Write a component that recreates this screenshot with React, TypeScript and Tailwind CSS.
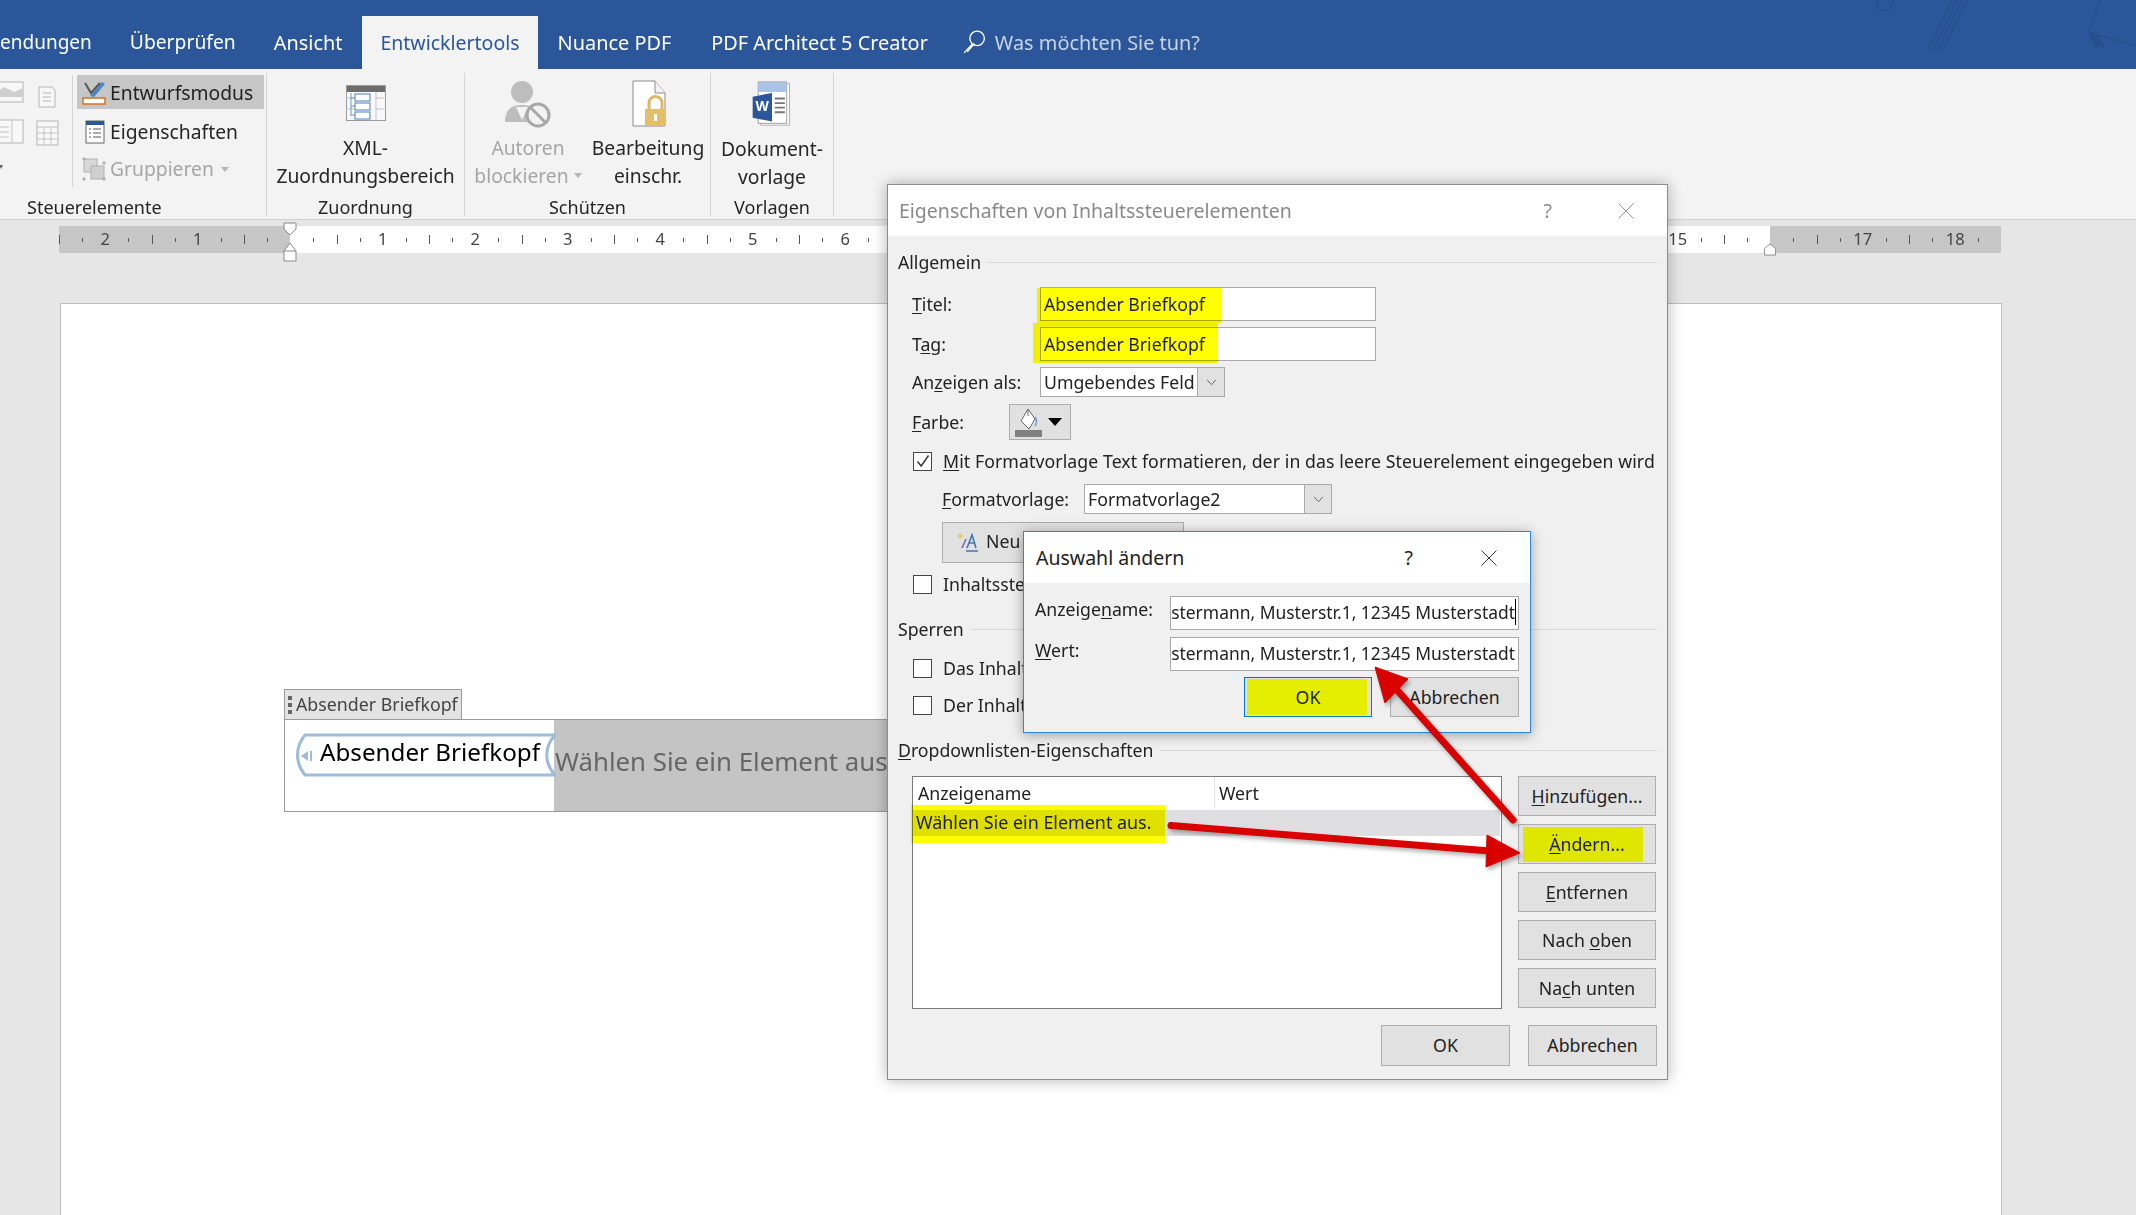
import type { ReactNode } from "react";

const tabs = ["endungen", "Überprüfen", "Ansicht", "Entwicklertools", "Nuance PDF", "PDF Architect 5 Creator"];
const rulerCells = Array.from({ length: 85 }, (_, i) => i - 10);

function U({ children }: { children: ReactNode }) {
  return <span className="underline underline-offset-2 decoration-1">{children}</span>;
}

function XIcon({ className }: { className: string }) {
  return (
    <svg viewBox="0 0 16 16" className={className} fill="none" stroke="currentColor" strokeWidth="0.9">
      <path d="M0.5 0.5 15.5 15.5M15.5 0.5 0.5 15.5" />
    </svg>
  );
}

function Chevron() {
  return (
    <svg viewBox="0 0 12 8" className="w-[11px] h-[7px]" fill="none" stroke="#555" strokeWidth="1">
      <path d="M1 1 6 6.5 11 1" />
    </svg>
  );
}

function GroupLine({ label, className }: { label: ReactNode; className?: string }) {
  return (
    <div className={`flex items-center h-6 -ml-px ${className ?? ""}`}>
      <span className="mr-[7px]">{label}</span>
      <div className="flex-1 h-px bg-[#d9d9d9]" />
    </div>
  );
}

function Check({ checked, label, className }: { checked?: boolean; label: ReactNode; className?: string }) {
  return (
    <div className={`flex items-center h-6 pl-[14px] whitespace-nowrap ${className ?? ""}`}>
      <div className="w-[19px] h-[19px] bg-white border border-[#444] flex items-center justify-center shrink-0">
        {checked && (
          <svg viewBox="0 0 16 16" className="w-4 h-4" fill="none" stroke="#333" strokeWidth="1.4">
            <path d="M2.5 8.5 6.2 13 13.5 2.5" />
          </svg>
        )}
      </div>
      <span className="ml-[11px]">{label}</span>
    </div>
  );
}

function Btn({ children, className }: { children: ReactNode; className?: string }) {
  return (
    <div className={`relative flex items-center justify-center bg-[#e1e1e1] border border-[#adadad] ${className ?? ""}`}>
      {children}
    </div>
  );
}

function RibbonGroup({ label, width, labelClass, children }: { label: string; width: string; labelClass?: string; children: ReactNode }) {
  return (
    <div className={`flex flex-col h-[143px] border-r border-[#d4d4d4] shrink-0 ${width}`}>
      <div className="flex-1 min-h-0 relative">{children}</div>
      <div className={`text-center h-[24px] leading-[30px] text-[18px] text-[#262626] ${labelClass ?? ""}`}>{label}</div>
    </div>
  );
}

function BigLabel({ lines, muted }: { lines: ReactNode[]; muted?: boolean }) {
  return (
    <div className={`text-center text-[19.3px] leading-[27.5px] whitespace-nowrap ${muted ? "text-[#a6a6a6]" : "text-[#262626]"}`}>
      {lines.map((l, i) => (
        <div key={i}>{l}</div>
      ))}
    </div>
  );
}

function SmallIcons() {
  return (
    <svg viewBox="0 0 72 112" className="w-[72px] h-[112px] shrink-0">
      <rect x="-8" y="7" width="31" height="20" fill="#f8f8f8" stroke="#b5b5b5" />
      <path d="M-8 20 4 12 14 17 23 13V22H-8Z" fill="#cfcfcf" />
      <path d="M39 12h13l3 3v17H39Z" fill="#f7f7f7" stroke="#b5b5b5" />
      <path d="M43 18h8M43 22h8M43 26h8" stroke="#b5b5b5" />
      <rect x="-8" y="45" width="31" height="23" fill="#f8f8f8" stroke="#b5b5b5" />
      <path d="M12 45v23M-6 52h15M-6 57h15M-6 62h15" stroke="#c4c4c4" />
      <rect x="37" y="46" width="21" height="24" fill="#f7f7f7" stroke="#b5b5b5" />
      <path d="M37 52h21M44 52v18M51 52v18M37 58h21M37 64h21" stroke="#c4c4c4" />
      <path d="M-1 90h4l-2 4Z" fill="#666" />
    </svg>
  );
}

export default function App() {
  return (
    <div className="relative w-[2136px] h-[1215px] overflow-hidden bg-[#e6e6e6] text-[17.7px] text-[#222] font-['Noto_Sans','Open_Sans',sans-serif]">
      {/* title tabs */}
      <div className="relative h-[69px] bg-[#2b579a] flex items-end text-white text-[19.9px] whitespace-nowrap overflow-hidden">
        <div className="flex items-end">
          {tabs.map((t) => (
            <div
              key={t}
              className={
                t === "Entwicklertools"
                  ? "h-[53px] px-[18px] bg-[#f3f3f3] text-[#2b579a] text-[19.5px] flex items-center"
                  : t === "endungen"
                    ? "h-[53px] pr-[19px] text-[19px] flex items-center"
                    : t === "Nuance PDF"
                      ? "h-[53px] pl-[20px] pr-[21px] flex items-center"
                      : t === "Überprüfen"
                        ? "h-[53px] px-[19px] text-[19.3px] flex items-center"
                        : t === "Ansicht"
                          ? "h-[53px] pl-[19px] pr-[20px] flex items-center"
                          : "h-[53px] px-[19px] flex items-center"
              }
            >
              {t}
            </div>
          ))}
        </div>
        <div className="h-[53px] ml-[15px] flex items-center text-[#c7d3e6]">
          <svg viewBox="0 0 24 26" className="w-[25px] h-[27px] mr-2" fill="none" stroke="#fff" strokeWidth="1.3">
            <circle cx="14.5" cy="9" r="7" />
            <path d="M10 14.5 2 23M12 14 5 22" />
          </svg>
          Was möchten Sie tun?
        </div>
        <svg viewBox="0 0 536 69" className="absolute right-0 top-0 w-[536px] h-[69px]" fill="none" stroke="#264f8c" strokeWidth="1.5">
          <path d="M277 0c0 8 3 11 7 11s8-4 10-11" />
          <path d="M328 50 352 0M333 50 357 0M338 50 362 0M343 50 367 0" />
          <path d="M500 0 489 32 536 46" />
          <path d="M489 32 496 48 500 44 504 48 498 36" fill="#264f8c" />
        </svg>
      </div>

      {/* ribbon */}
      <div className="h-[151px] bg-[#f3f3f3] border-b border-[#d0d0d0] pt-1 flex items-start text-[19.3px]">
        <RibbonGroup label="Steuerelemente" width="w-[267px]" labelClass="text-left pl-[27px]">
          <div className="flex pt-[2px]">
            <SmallIcons />
            <div className="flex flex-col border-l border-[#d4d4d4] pl-1 h-[112px] whitespace-nowrap">
              <div className="w-[187px] h-[35px] bg-[#c6c6c6] flex items-center pl-[5px] pt-[2px]">
                <svg viewBox="0 0 24 24" className="w-6 h-6 mr-[4px]" fill="none">
                  <path d="M3 2 9 12 18 2" stroke="#555" strokeWidth="2" />
                  <path d="M8 15 20 1l3 2-11 13Z" fill="#4a86c5" />
                  <rect x="1" y="17" width="22" height="6" fill="#fff" stroke="#d8701f" strokeWidth="1.5" />
                </svg>
                Entwurfsmodus
              </div>
              <div className="h-[38px] flex items-center pl-[8px] mt-[3px] pt-[2px] text-[#262626]">
                <svg viewBox="0 0 20 24" className="w-[20px] h-[24px] mr-[5px]" fill="none">
                  <rect x="1" y="1" width="18" height="22" fill="#fff" stroke="#666" />
                  <rect x="1" y="1" width="18" height="4" fill="#2b579a" />
                  <path d="M4 9h2M8 9h8M4 13h2M8 13h8M4 17h2M8 17h8" stroke="#555" />
                </svg>
                Eigenschaften
              </div>
              <div className="h-[38px] flex items-center pl-[5px] pt-[2px] text-[#a6a6a6]">
                <svg viewBox="0 0 24 24" className="w-6 h-6 mr-[4px]" fill="none" stroke="#b0b0b0">
                  <rect x="2" y="2" width="13" height="13" fill="#d8d8d8" />
                  <rect x="9" y="9" width="13" height="13" fill="#d0d0d0" />
                  <path d="M1 1h2v2H1ZM21 21h2v2h-2ZM1 21h2v2H1ZM21 5h2v2h-2Z" fill="#aaa" />
                </svg>
                Gruppieren
                <span className="ml-[7px] border-x-[4px] border-x-transparent border-t-[5px] border-t-[#b5b5b5]" />
              </div>
            </div>
          </div>
        </RibbonGroup>

        <RibbonGroup label="Zuordnung" width="w-[198px]">
          <div className="flex flex-col items-center pt-[12px]">
            <svg viewBox="0 0 40 36" className="w-[40px] h-[36px]">
              <rect x="0.5" y="0.5" width="39" height="35" fill="#f8f8f8" stroke="#999" />
              <rect x="1" y="1" width="38" height="6" fill="#6d6d6d" />
              <path d="M30 7v29M0 13h8M0 24h8M30 13h10M30 24h10" stroke="#c4c4c4" />
              <path d="M5 8v23M5 13h4M5 21h4M5 30h4" stroke="#6f9bc9" />
              <rect x="9" y="9" width="15" height="7" fill="#fff" stroke="#4a7fb9" />
              <rect x="9" y="18" width="15" height="7" fill="#fff" stroke="#4a7fb9" />
              <rect x="9" y="27" width="15" height="7" fill="#fff" stroke="#4a7fb9" />
            </svg>
            <div className="mt-[13px]">
              <BigLabel lines={["XML-", "Zuordnungsbereich"]} />
            </div>
          </div>
        </RibbonGroup>

        <RibbonGroup label="Schützen" width="w-[246px]">
          <div className="flex pt-[4px]">
            <div className="w-[126px] flex flex-col items-center">
              <svg viewBox="0 0 46 48" className="w-[46px] h-[48px] mt-[3px]">
                <circle cx="17" cy="12" r="11" fill="#bdbdbd" />
                <path d="M0 42c0-12 6-17 17-17s17 5 17 17Z" fill="#bdbdbd" />
                <path d="M11 27 17 40 23 27Z" fill="#f3f3f3" />
                <circle cx="33" cy="35" r="11" fill="#f3f3f3" stroke="#a8a8a8" strokeWidth="3" />
                <path d="M25 27 41 43" stroke="#a8a8a8" strokeWidth="3" />
              </svg>
              <div className="mt-[6px]">
                <BigLabel
                  muted
                  lines={[
                    "Autoren",
                    <span className="inline-flex items-center">
                      blockieren
                      <span className="ml-[5px] border-x-[4px] border-x-transparent border-t-[5px] border-t-[#b5b5b5]" />
                    </span>,
                  ]}
                />
              </div>
            </div>
            <div className="w-[114px] flex flex-col items-center">
              <svg viewBox="0 0 44 48" className="w-[44px] h-[48px] mt-[3px] ml-1">
                <path d="M5 1h22l10 12v33H5Z" fill="#fff" stroke="#8a8a8a" />
                <path d="M27 1v12h10" fill="#f2f2f2" stroke="#8a8a8a" />
                <path d="M21 30v-7a6.5 6.5 0 0 1 13 0v7" fill="none" stroke="#dcb967" strokeWidth="3" />
                <rect x="17" y="29" width="21" height="17" fill="#e3bf6c" />
                <rect x="26" y="34" width="3" height="7" fill="#fff" />
              </svg>
              <div className="mt-[6px]">
                <BigLabel lines={["Bearbeitung", "einschr."]} />
              </div>
            </div>
          </div>
        </RibbonGroup>

        <RibbonGroup label="Vorlagen" width="w-[123px]">
          <div className="flex flex-col items-center pt-[8px]">
            <svg viewBox="0 0 42 50" className="w-[40px] h-[46px]">
              <rect x="9" y="3" width="31" height="45" fill="#fff" stroke="#aaa" />
              <rect x="6" y="1" width="31" height="45" fill="#fff" stroke="#999" />
              <rect x="6" y="1" width="31" height="11" fill="#a9c4e6" />
              <path d="M24 19h11M24 24h11M24 29h11M24 34h11" stroke="#777" strokeWidth="2" />
              <path d="M0 17 21 13V44L0 40Z" fill="#2b579a" />
              <text x="3" y="33" fontSize="15" fontWeight="700" fill="#fff" fontFamily="Noto Sans">W</text>
            </svg>
            <div className="mt-[8px]">
              <BigLabel lines={["Dokument-", "vorlage"]} />
            </div>
          </div>
        </RibbonGroup>
      </div>

      {/* ruler */}
      <div className="relative mt-[6px] ml-[59px] w-[1942px] h-[27px] flex overflow-hidden text-[16.5px] text-[#444]">
        {rulerCells.map((k) => (
          <div
            key={k}
            className={`relative w-[23.125px] shrink-0 h-full flex items-center ${k < 0 || k >= 64 ? "bg-[#c6c6c6]" : "bg-white"}`}
          >
            {k === 0 || k === 64 ? null : k % 4 === 0 ? (
              <span className="-translate-x-1/2">{Math.abs(k / 4)}</span>
            ) : k % 2 === 0 ? (
              <span className="w-px h-[9px] bg-[#555]" />
            ) : (
              <span className="w-px h-[4px] bg-[#555]" />
            )}
          </div>
        ))}
      </div>
      <svg viewBox="0 0 14 40" className="absolute left-[283px] top-[222px] w-[14px] h-[40px]" fill="#fff" stroke="#888">
        <path d="M1 1H13V7L7 13 1 7Z" />
        <path d="M7 21 13 29V39H1V29Z" />
        <path d="M1 29H13" />
      </svg>
      <svg viewBox="0 0 14 14" className="absolute left-[1763px] top-[243px] w-[14px] h-[13px]" fill="#fff" stroke="#888">
        <path d="M1 13V6L7 1 13 6V13Z" />
      </svg>

      {/* page */}
      <div className="mt-[50px] ml-[60px] w-[1942px] h-[950px] bg-white border border-[#bdbdbd] pt-[385px] pl-[223px]">
        <div className="w-[178px] h-[30px] bg-[#e3e3e3] border border-[#9a9a9a] border-b-0 flex items-center text-[17.8px] text-[#444] pl-[3px] whitespace-nowrap">
          <span className="flex flex-col gap-[3px] mr-[4px]">
            <span className="w-[4px] h-[4px] bg-[#666]" />
            <span className="w-[4px] h-[4px] bg-[#666]" />
            <span className="w-[4px] h-[4px] bg-[#666]" />
          </span>
          Absender Briefkopf
        </div>
        <div className="flex w-[700px] h-[93px] border border-[#9a9a9a]">
          <div className="relative w-[262px] h-[44px] mt-[13px] ml-[8px] shrink-0 flex items-center pl-[27px] pb-[6px] text-[24.2px] text-black whitespace-nowrap">
            <svg viewBox="0 0 263 44" className="absolute left-0 top-0 w-[263px] h-[44px]" fill="none" stroke="#9dbcd9" strokeWidth="3">
              <path d="M12 2H262C251 14 251 30 262 42H12C2 30 2 14 12 2Z" />
            </svg>
            <svg viewBox="0 0 12 12" className="absolute left-[8px] top-[17px] w-[12px] h-[12px]" fill="#9dbcd9">
              <path d="M0 6 7 1V11ZM9 1h2v10H9Z" />
            </svg>
            Absender Briefkopf
          </div>
          <div className="flex-1 ml-[-1px] h-full bg-[#c4c4c4] text-[25.8px] text-[#666] pt-[22px] pl-[1px] whitespace-nowrap">
            Wählen Sie ein Element aus
          </div>
        </div>
      </div>

      {/* properties dialog */}
      <div className="absolute left-[887px] top-[184px] w-[781px] h-[896px] bg-[#f0f0f0] border border-[#8c8c8c] shadow-[0_0_14px_rgba(0,0,0,0.3)] whitespace-nowrap">
        <div className="h-[51px] bg-white flex items-center pl-[11px] text-[19.5px] text-[#8a8a8a]">
          <span className="flex-1">Eigenschaften von Inhaltssteuerelementen</span>
          <span className="mr-[66px]">?</span>
          <XIcon className="w-[16px] h-[16px] mr-[33px]" />
        </div>
        <div className="pl-[11px] pr-[10px] pt-[14px]">
          <GroupLine label="Allgemein" />
          <div className="flex items-center h-[34px] mt-[13px] pl-[13px]">
            <span className="w-[128px]"><U>T</U>itel:</span>
            <div className="relative w-[336px] h-[34px] bg-white border border-[#a9a9a9] flex items-center pl-[3px]">
              <div className="absolute left-[-4px] top-0 w-[184px] h-[35px] bg-[#ffff00] mix-blend-multiply" />
              <span className="relative">Absender Briefkopf</span>
            </div>
          </div>
          <div className="flex items-center h-[34px] mt-[6px] pl-[13px]">
            <span className="w-[128px]">T<U>a</U>g:</span>
            <div className="relative w-[336px] h-[34px] bg-white border border-[#a9a9a9] flex items-center pl-[3px]">
              <div className="absolute left-[-8px] top-[-5px] w-[185px] h-[40px] bg-[#ffff00] mix-blend-multiply" />
              <span className="relative">Absender Briefkopf</span>
            </div>
          </div>
          <div className="flex items-center h-[30px] mt-[6px] pl-[13px]">
            <span className="w-[128px]">An<U>z</U>eigen als:</span>
            <div className="w-[185px] h-[30px] bg-white border border-[#a9a9a9] flex items-center pl-[3px]">
              <span className="flex-1">Umgebendes Feld</span>
              <div className="w-[27px] h-full bg-[#e1e1e1] border-l border-[#a9a9a9] flex items-center justify-center"><Chevron /></div>
            </div>
          </div>
          <div className="flex items-center h-[36px] mt-[7px] pl-[13px]">
            <span className="w-[97px]"><U>F</U>arbe:</span>
            <div className="w-[62px] h-[36px] bg-[#e1e1e1] border border-[#adadad] flex items-center pl-[4px]">
              <svg viewBox="0 0 30 30" className="w-[30px] h-[30px]" fill="none">
                <path d="M14 2 7 14l8 8 6-10Z" fill="#fff" stroke="#666" />
                <path d="M14 2v7" stroke="#666" />
                <path d="M21 10c2 3 2 6 0 9" stroke="#6f9bc9" strokeWidth="1.5" />
                <rect x="1" y="23" width="27" height="7" fill="#808080" />
              </svg>
              <span className="ml-[4px] border-x-[7px] border-x-transparent border-t-[8px] border-t-black" />
            </div>
          </div>
          <Check checked className="mt-[9px] tracking-[0.08px]" label={<><U>M</U>it Formatvorlage Text formatieren, der in das leere Steuerelement eingegeben wird</>} />
          <div className="flex items-center h-[30px] mt-[11px] pl-[43px]">
            <span className="w-[142px]"><U>F</U>ormatvorlage:</span>
            <div className="w-[248px] h-[30px] bg-white border border-[#a9a9a9] flex items-center pl-[3px]">
              <span className="flex-1">Formatvorlage2</span>
              <div className="w-[27px] h-full bg-[#e1e1e1] border-l border-[#a9a9a9] flex items-center justify-center"><Chevron /></div>
            </div>
          </div>
          <div className="mt-[8px] ml-[43px] w-[242px] h-[41px] bg-[#e1e1e1] border border-[#adadad] flex items-center pl-[14px] pb-[2px]">
            <svg viewBox="0 0 22 22" className="w-[22px] h-[22px] mr-[7px]" fill="none">
              <path d="M3 1l1 3 3 1-3 1-1 3-1-3-3-1 3-1Z" fill="#e3c75a" />
              <path d="M5 17 9 8" stroke="#7a62b8" strokeWidth="1.5" />
              <path d="M10 17 15 4l4 13M12 12h6M9 20h12" stroke="#3f78b5" strokeWidth="1.6" />
            </svg>
            Neu
          </div>
          <Check className="mt-[9px]" label="Inhaltsste" />
          <GroupLine label="Sperren" className="mt-[21px]" />
          <Check className="mt-[15px]" label="Das Inhalt" />
          <Check className="mt-[13px]" label="Der Inhalt" />
          <GroupLine label={<><U>D</U>ropdownlisten-Eigenschaften</>} className="mt-[21px]" />
          <div className="flex mt-[14px] pl-[13px]">
            <div className="w-[590px] h-[233px] bg-white border border-[#7a7a7a]">
              <div className="flex h-[33px] items-center border-b border-white">
                <div className="w-[302px] pl-[5px] border-r border-[#e3e3e3] h-full flex items-center">Anzeigename</div>
                <div className="pl-[4px]">Wert</div>
              </div>
              <div className="relative h-[26px] mr-[1px] bg-[#dfdfe1]">
                <div className="absolute left-[-2px] top-[-5px] w-[254px] h-[38px] bg-[#ffff00] mix-blend-multiply flex items-center pl-[5px] pb-[3px] text-[17.9px]">
                  Wählen Sie ein Element aus.
                </div>
              </div>
            </div>
            <div className="flex flex-col gap-[8px] ml-[16px]">
              <Btn className="w-[138px] h-[40px]"><span><U>H</U>inzufügen...</span></Btn>
              <Btn className="w-[138px] h-[40px]">
                <div className="absolute left-[4px] top-[2px] w-[120px] h-[35px] bg-[#dfe600]" />
                <span className="relative"><U>Ä</U>ndern...</span>
              </Btn>
              <Btn className="w-[138px] h-[40px]"><span><U>E</U>ntfernen</span></Btn>
              <Btn className="w-[138px] h-[40px]"><span>Nach <U>o</U>ben</span></Btn>
              <Btn className="w-[138px] h-[40px]"><span>Na<U>c</U>h unten</span></Btn>
            </div>
          </div>
          <div className="flex justify-end gap-[18px] mt-[16px]">
            <Btn className="w-[129px] h-[41px]">OK</Btn>
            <Btn className="w-[129px] h-[41px]">Abbrechen</Btn>
          </div>
        </div>
      </div>

      {/* change selection dialog */}
      <div className="absolute left-[1023px] top-[531px] w-[508px] h-[202px] bg-[#f0f0f0] border border-[#2b88d8] shadow-[0_2px_12px_rgba(0,0,0,0.35)] whitespace-nowrap">
        <div className="h-[51px] bg-white flex items-center pl-[12px] text-[19.5px] text-[#222]">
          <span className="flex-1">Auswahl ändern</span>
          <span className="mr-[68px]">?</span>
          <XIcon className="w-[16px] h-[16px] mr-[33px]" />
        </div>
        <div className="pl-[11px] pr-[11px] pt-[13px]">
          <div className="flex items-start h-[34px]">
            <span className="w-[135px] leading-[26px]">Anzeige<U>n</U>ame:</span>
            <div className="flex-1 min-w-0 h-[34px] bg-white border border-[#a9a9a9] flex items-center justify-end pr-[2px] pb-[2px] text-[17.45px]">
              <span>stermann, Musterstr.1, 12345 Musterstadt</span>
              <span className="w-px h-[26px] bg-black shrink-0" />
            </div>
          </div>
          <div className="flex items-start h-[34px] mt-[7px]">
            <span className="w-[135px] leading-[26px]"><U>W</U>ert:</span>
            <div className="flex-1 min-w-0 h-[34px] bg-white border border-[#a9a9a9] flex items-center justify-end pr-[3px] pb-[2px] text-[17.45px]">
              <span>stermann, Musterstr.1, 12345 Musterstadt</span>
            </div>
          </div>
          <div className="flex justify-end gap-[18px] mt-[6px]">
            <div className="relative w-[128px] h-[40px] bg-[#e1e1e1] border border-[#0078d7] flex items-center justify-center">
              <div className="absolute left-[2px] top-[1px] w-[120px] h-[36px] bg-[#e5ee00]" />
              <span className="relative">OK</span>
            </div>
            <Btn className="w-[129px] h-[40px]">Abbrechen</Btn>
          </div>
        </div>
      </div>

      {/* red annotation arrows */}
      <svg viewBox="0 0 2136 1215" className="absolute inset-0 w-[2136px] h-[1215px] pointer-events-none">
        <g fill="#d90000" stroke="#d90000" className="drop-shadow-[2px_3px_2px_rgba(0,0,0,0.3)]">
          <path d="M1513 820 1397 690" strokeWidth="7" strokeLinecap="round" fill="none" />
          <path d="M1375 667 1408 679 1385 703Z" strokeWidth="1" />
          <path d="M1171 825.5 1490 851" strokeWidth="7" strokeLinecap="round" fill="none" />
          <path d="M1520 853 1487 835 1486 867Z" strokeWidth="1" />
        </g>
      </svg>
    </div>
  );
}
